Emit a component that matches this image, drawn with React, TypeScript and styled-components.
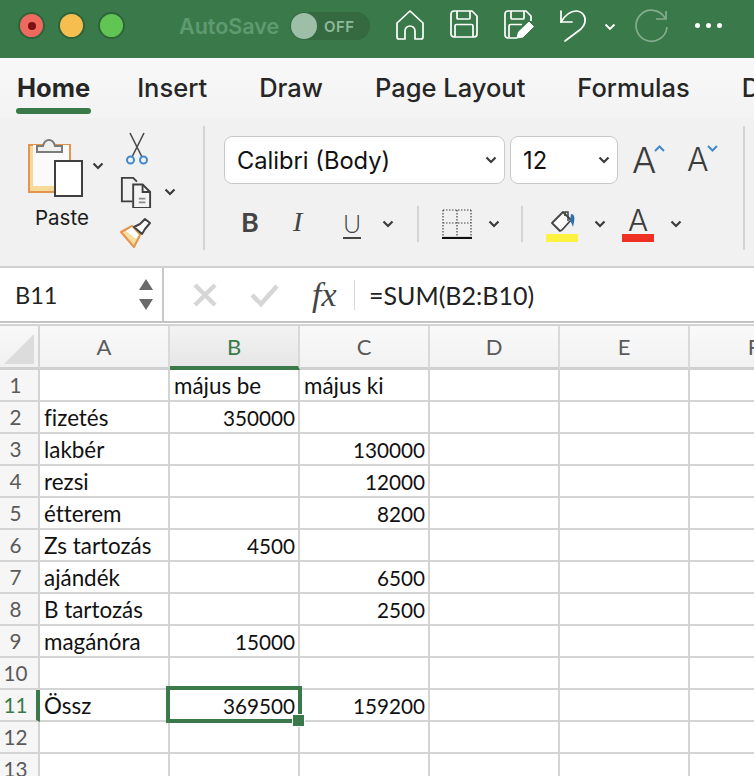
import styled, { createGlobalStyle } from "styled-components";

const GREEN = "#3a7a4a";

const rows: [string, string, string][] = [
  ["", "május be", "május ki"],
  ["fizetés", "350000", ""],
  ["lakbér", "", "130000"],
  ["rezsi", "", "12000"],
  ["étterem", "", "8200"],
  ["Zs tartozás", "4500", ""],
  ["ajándék", "", "6500"],
  ["B tartozás", "", "2500"],
  ["magánóra", "15000", ""],
  ["", "", ""],
  ["Össz", "369500", "159200"],
  ["", "", ""],
  ["", "", ""],
];

const columns = ["A", "B", "C", "D", "E", "F"];

const isNumber = (v: string) => /^\d+$/.test(v);

function Chevron({ left = 0 }: { left?: number }) {
  return (
    <ChevronIcon viewBox="0 0 12 8" $left={left}>
      <path d="M1.5 1.5 6 6l4.5-4.5" />
    </ChevronIcon>
  );
}

export default function App() {
  return (
    <Page>
      <Global />
      <TitleBar>
        <Lights>
          <Light $color="#ee6a5f">
            <Dot />
          </Light>
          <Light $color="#f6bd4f" />
          <Light $color="#61c554" />
        </Lights>
        <AutoSave>AutoSave</AutoSave>
        <Toggle>
          <Knob />
          <span>OFF</span>
        </Toggle>
        <QuickIcons>
          <svg width="30" height="32" viewBox="0 0 30 32" fill="none" stroke="#fff" strokeWidth="1.7" strokeLinejoin="round">
            <path d="M2 14 15 2l13 12v14a2 2 0 0 1-2 2h-6v-8a5 5 0 0 0-10 0v8H4a2 2 0 0 1-2-2Z" />
          </svg>
          <QuickIcon width="30" height="30" viewBox="0 0 30 30" fill="none" stroke="#fff" strokeWidth="1.7" strokeLinejoin="round" $left={24}>
            <path d="M2 5a3 3 0 0 1 3-3h18l5 5v18a3 3 0 0 1-3 3H5a3 3 0 0 1-3-3Z" />
            <path d="M8 2v7a1 1 0 0 0 1 1h11a1 1 0 0 0 1-1V2" />
            <path d="M6 28V17a1.5 1.5 0 0 1 1.5-1.5h15A1.5 1.5 0 0 1 24 17v11" />
          </QuickIcon>
          <QuickIcon width="32" height="32" viewBox="0 0 32 32" fill="none" stroke="#fff" strokeWidth="1.7" strokeLinejoin="round" $left={24}>
            <path d="M14 29H5a3 3 0 0 1-3-3V5a3 3 0 0 1 3-3h18l5 5v5" />
            <path d="M8 2v7a1 1 0 0 0 1 1h11a1 1 0 0 0 1-1V2" />
            <path d="M6 28V17a1.5 1.5 0 0 1 1.5-1.5H19" />
            <path d="M14 29l1.5-6L26 13l4.5 4.5L20 28Z" fill="#fff" strokeWidth="1" />
          </QuickIcon>
          <QuickIcon width="30" height="34" viewBox="0 0 30 34" fill="none" stroke="#fff" strokeWidth="1.7" strokeLinecap="round" strokeLinejoin="round" $left={24}>
            <path d="M2 2v11h11" />
            <path d="M2 13C7 5 13 2 17 2c6 0 10 5 9 11-.5 3-2 5-4 7L6 32" />
          </QuickIcon>
          <UndoChevron viewBox="0 0 12 8">
            <path d="M1.5 1.5 6 6l4.5-4.5" />
          </UndoChevron>
          <QuickIcon width="34" height="34" viewBox="0 0 34 34" fill="none" stroke="#fff" strokeWidth="1.7" opacity=".38" $left={19}>
            <path d="M30 9A15.5 15.5 0 1 0 32 18" />
            <path d="M31 2v8H21" />
          </QuickIcon>
          <Dots>
            <i />
            <i />
            <i />
          </Dots>
        </QuickIcons>
      </TitleBar>

      <Tabs>
        <Tab $active>Home</Tab>
        <Tab>Insert</Tab>
        <Tab>Draw</Tab>
        <Tab>Page Layout</Tab>
        <Tab>Formulas</Tab>
        <Tab>Data</Tab>
      </Tabs>

      <Ribbon>
        <ClipGroup>
          <PasteColumn>
            <svg width="56" height="62" viewBox="0 0 56 62">
              <rect x="1" y="10" width="41" height="47" fill="#f7d998" stroke="#e39550" strokeWidth="2" />
              <rect x="5" y="10" width="36" height="41" fill="#fafafa" />
              <path d="M9 17v-6h6c1-4 3-6 6-6s5 2 6 6h7v6Z" fill="#f0f0f0" stroke="#7b7b78" strokeWidth="2" />
              <rect x="27" y="26" width="27" height="35" fill="#fff" stroke="#3f3f3f" strokeWidth="2" />
            </svg>
            <PasteLabel>Paste</PasteLabel>
          </PasteColumn>
          <PasteChevron>
            <Chevron />
          </PasteChevron>
          <ToolColumn>
            <QuickIcon width="24" height="34" viewBox="0 0 24 34" fill="none" $left={5}>
              <path d="M5 1 17 25M19 1 7 25" stroke="#4a4a4a" strokeWidth="1.6" />
              <circle cx="5.5" cy="28" r="3.5" stroke="#3f8ad0" strokeWidth="2" />
              <circle cx="18.5" cy="28" r="3.5" stroke="#3f8ad0" strokeWidth="2" />
            </QuickIcon>
            <CopyRow>
              <svg width="32" height="32" viewBox="0 0 34 34" fill="none" stroke="#3f3f3f" strokeWidth="2">
                <path d="M13 27H2V2h12l4 4" />
                <path d="M14 9h10l8 8v17H14Z" fill="#f4f4f4" />
                <path d="M24 9v8h8" />
                <path d="M20 24h7M20 28h7" stroke="#8a8a8a" />
              </svg>
              <Chevron />
            </CopyRow>
            <svg width="32" height="30" viewBox="0 0 32 30" fill="none">
              <path d="M1 14 12 8l8 9-6 12Z" fill="#f8dd9f" stroke="#e39550" strokeWidth="2" strokeLinejoin="round" />
              <path d="M6 13 12 9l7 8-3 4Z" fill="#fff" />
              <path d="M14 9l6-3 5-5 5 4-5 6-3 5Z" fill="#fff" stroke="#444" strokeWidth="2" strokeLinejoin="round" />
            </svg>
          </ToolColumn>
        </ClipGroup>
        <Divider $height={124} />
        <FontGroup>
          <FontRow>
            <Select $width={281}>
              Calibri (Body)
              <Chevron />
            </Select>
            <Select $width={108}>
              12
              <Chevron />
            </Select>
            <GrowFont $size={36} $width={41}>
              A
              <svg width="11" height="7" viewBox="0 0 11 7" fill="none" stroke="#3f8ad0" strokeWidth="2">
                <path d="M1 6 5.5 1.5 10 6" />
              </svg>
            </GrowFont>
            <GrowFont $size={32} $width={40}>
              A
              <svg width="11" height="7" viewBox="0 0 11 7" fill="none" stroke="#3f8ad0" strokeWidth="2">
                <path d="M1 1l4.5 4.5L10 1" />
              </svg>
            </GrowFont>
          </FontRow>
          <FormatRow>
            <Bold>B</Bold>
            <Italic>I</Italic>
            <Underline>U</Underline>
            <Chevron left={21} />
            <Divider $height={36} $left={23} />
            <BorderIcon width="30" height="30" viewBox="0 0 30 30" fill="none" stroke="#444" strokeWidth="1.2" strokeDasharray="1.5 1.5">
              <path d="M1 1h28M1 14h28M15 1v27M1 1v27M29 1v27" />
              <path d="M0 29h30" stroke="#111" strokeWidth="2.2" strokeDasharray="none" />
            </BorderIcon>
            <Chevron left={16} />
            <Divider $height={36} $left={21} />
            <ColorButton $bar="#fdf23f" $left={23}>
              <svg width="28" height="24" viewBox="0 0 28 24" fill="none" style={{ marginRight: -4 }}>
                <path d="M2 13 13 2l8 8-9 10-2 1Z" fill="#fafafa" stroke="#444" strokeWidth="1.8" strokeLinejoin="round" />
                <path d="M15 6V2h3v9" stroke="#444" strokeWidth="1.5" />
                <path d="M21 4c3 0 4 3 3 8l-1 5c-1-3-2-5-3-6Z" fill="#2f6fae" />
              </svg>
            </ColorButton>
            <Chevron left={16} />
            <ColorButton $bar="#ee3124" $left={16}>
              <ColorLetter>A</ColorLetter>
            </ColorButton>
            <Chevron left={16} />
          </FormatRow>
        </FontGroup>
        <Divider $height={124} />
      </Ribbon>

      <FormulaBar>
        <NameBox>
          B11
          <Stepper>
            <i />
            <i />
          </Stepper>
        </NameBox>
        <FormulaBox>
          <svg width="24" height="24" viewBox="0 0 24 24" stroke="#d6d6d6" strokeWidth="4.5" fill="none">
            <path d="M2 2l20 20M22 2 2 22" />
          </svg>
          <CheckIcon width="30" height="24" viewBox="0 0 30 24" stroke="#d6d6d6" strokeWidth="4.5" fill="none">
            <path d="M2 12l9 9L27 3" />
          </CheckIcon>
          <Fx>fx</Fx>
          <FxDivider />
          <FormulaText>=SUM(B2:B10)</FormulaText>
        </FormulaBox>
      </FormulaBar>

      <Sheet>
        <Corner>
          <svg width="32" height="32" viewBox="0 0 32 32">
            <path d="M31 1v30H1Z" fill="#dcdcdc" />
          </svg>
        </Corner>
        {columns.map((c) => (
          <ColumnHead key={c} $active={c === "B"}>
            {c}
          </ColumnHead>
        ))}
        {rows.map((row, i) => (
          <Row key={i} row={row} index={i + 1} />
        ))}
      </Sheet>
    </Page>
  );
}

function Row({ row, index }: { row: [string, string, string]; index: number }) {
  const active = index === 11;
  return (
    <>
      <RowHead $active={active}>{index}</RowHead>
      {row.map((v, i) => (
        <Cell key={i} $number={isNumber(v)}>
          {v}
          {active && i === 1 && (
            <Selection>
              <Handle />
            </Selection>
          )}
        </Cell>
      ))}
      <Cell />
      <Cell />
      <Cell />
    </>
  );
}

const Global = createGlobalStyle`
  html, body {
    margin: 0;
    padding: 0;
    background: #fff;
    overflow: hidden;
  }
  * {
    box-sizing: border-box;
  }
`;

const Page = styled.div`
  width: 754px;
  height: 776px;
  overflow: hidden;
  font-family: Inter, "Liberation Sans", sans-serif;
  background: #fff;
`;

const TitleBar = styled.div`
  height: 58px;
  background: ${GREEN};
  display: flex;
  align-items: flex-start;
  padding: 12px 0 0 18px;
`;

const Lights = styled.div`
  display: flex;
  gap: 13px;
`;

const Light = styled.div<{ $color: string }>`
  width: 27px;
  height: 27px;
  border-radius: 50%;
  background: ${(p) => p.$color};
  border: 2px solid #2f6339;
  display: flex;
  align-items: center;
  justify-content: center;
`;

const Dot = styled.div`
  width: 8px;
  height: 8px;
  border-radius: 50%;
  background: #7d1010;
`;

const AutoSave = styled.div`
  margin: 1px 0 0 54px;
  width: 111px;
  font-size: 21.5px;
  line-height: 27px;
  font-weight: 600;
  color: #5f9a70;
  white-space: nowrap;
`;

const Toggle = styled.div`
  width: 80px;
  height: 28px;
  border-radius: 14px;
  background: #35693f;
  display: flex;
  align-items: center;
  gap: 7px;
  font-size: 15px;
  font-weight: 600;
  letter-spacing: 0.5px;
  color: #8fb99b;
`;

const Knob = styled.div`
  width: 26px;
  height: 26px;
  border-radius: 50%;
  background: #9dbfa8;
  margin-left: 1px;
`;

const QuickIcons = styled.div`
  display: flex;
  align-items: flex-start;
  margin: -3px 0 0 25px;
`;

const QuickIcon = styled.svg<{ $left: number }>`
  margin-left: ${(p) => p.$left}px;
  flex: none;
`;

const UndoChevron = styled.svg`
  width: 12px;
  height: 8px;
  margin: 14px 0 0 15px;
  fill: none;
  stroke: #fff;
  stroke-width: 1.8;
`;

const Dots = styled.div`
  display: flex;
  gap: 6px;
  margin: 14px 0 0 26px;

  i {
    width: 5px;
    height: 5px;
    border-radius: 50%;
    background: #fff;
  }
`;

const Tabs = styled.div`
  height: 60px;
  background: linear-gradient(#f8f8f8, #f3f3f3);
  display: flex;
  gap: 52px;
  padding-left: 17px;
  white-space: nowrap;
`;

const Tab = styled.div<{ $active?: boolean }>`
  position: relative;
  height: 56px;
  font-size: 25.5px;
  line-height: 59px;
  font-weight: ${(p) => (p.$active ? 700 : 500)};
  color: #262626;
  margin-right: ${(p) => (p.$active ? "-5px" : "0")};

  &::after {
    content: "";
    display: ${(p) => (p.$active ? "block" : "none")};
    position: absolute;
    left: -1px;
    right: -1px;
    top: 50px;
    height: 6px;
    border-radius: 3px;
    background: ${GREEN};
  }
`;

const Ribbon = styled.div`
  height: 150px;
  background: #f1f1f1;
  border-bottom: 2px solid #d0d0d0;
  display: flex;
  align-items: flex-start;
  padding-top: 8px;
`;

const ClipGroup = styled.div`
  width: 203px;
  display: flex;
  padding-left: 28px;
`;

const PasteColumn = styled.div`
  width: 68px;
  display: flex;
  flex-direction: column;
  align-items: flex-start;
  padding-top: 9px;
`;

const PasteLabel = styled.div`
  margin: 9px 0 0 7px;
  font-size: 20.5px;
  line-height: 24px;
  color: #1c1c1c;
`;

const PasteChevron = styled.div`
  margin: 28px 0 0 -4px;
`;

const ToolColumn = styled.div`
  display: flex;
  flex-direction: column;
  align-items: flex-start;
  margin-left: 16px;
  padding-top: 6px;
  gap: 10px;
`;

const CopyRow = styled.div`
  display: flex;
  align-items: center;
  gap: 12px;
`;

const ChevronIcon = styled.svg<{ $left: number }>`
  width: 12px;
  height: 8px;
  margin-left: ${(p) => p.$left}px;
  fill: none;
  stroke: #3c3c3c;
  stroke-width: 2.2;
  flex: none;
`;

const Divider = styled.div<{ $height: number; $left?: number }>`
  width: 2px;
  height: ${(p) => p.$height}px;
  margin-left: ${(p) => p.$left ?? 0}px;
  background: #d4d4d4;
  flex: none;
`;

const FontGroup = styled.div`
  width: 538px;
  padding: 10px 0 0 19px;
`;

const FontRow = styled.div`
  display: flex;
  align-items: center;
  gap: 5px;
`;

const Select = styled.div<{ $width: number }>`
  width: ${(p) => p.$width}px;
  height: 48px;
  background: #fff;
  border: 1.5px solid #c9c9c9;
  border-radius: 8px;
  display: flex;
  align-items: center;
  justify-content: space-between;
  padding: 0 7px 0 12px;
  font-size: 23.7px;
  color: #111;
`;

const GrowFont = styled.div<{ $size: number; $width: number }>`
  display: flex;
  align-items: flex-start;
  margin-left: 9px;
  width: ${(p) => p.$width}px;
  font-size: ${(p) => p.$size}px;
  line-height: 40px;
  font-weight: 300;
  color: #3c3c3c;

  svg {
    flex: none;
    margin: 5px 0 0 -2px;
  }
`;

const FormatRow = styled.div`
  display: flex;
  align-items: center;
  margin-top: 22px;
  height: 36px;
  padding-left: 17px;
`;

const Bold = styled.div`
  width: 52px;
  font: 700 27px Lato, sans-serif;
  line-height: 32px;
  margin-top: -4px;
  color: #444;
`;

const Italic = styled.div`
  width: 50px;
  font: italic 28px "Liberation Serif", serif;
  line-height: 32px;
  margin-top: -4px;
  color: #444;
`;

const Underline = styled.div`
  width: 18px;
  font: 300 25px Lato, sans-serif;
  color: #444;
  border-bottom: 2px solid #444;
  text-align: center;
  line-height: 28px;
`;

const BorderIcon = styled.svg`
  margin-left: 23px;
  flex: none;
`;

const ColorButton = styled.div<{ $bar: string; $left: number }>`
  width: 32px;
  height: 36px;
  margin-left: ${(p) => p.$left}px;
  border-bottom: 8px solid ${(p) => p.$bar};
  display: flex;
  justify-content: center;
  align-items: flex-end;
`;

const ColorLetter = styled.div`
  font-size: 30px;
  line-height: 28px;
  font-weight: 300;
  color: #3c3c3c;
`;

const FormulaBar = styled.div`
  height: 55px;
  background: #fff;
  display: flex;
  border-bottom: 2px solid #c4c4c4;
`;

const NameBox = styled.div`
  width: 164px;
  display: flex;
  align-items: center;
  justify-content: space-between;
  padding: 0 9px 0 15px;
  font: 23.5px Lato, sans-serif;
  color: #222;
  border-right: 2px solid #c9c9c9;
`;

const Stepper = styled.div`
  display: flex;
  flex-direction: column;
  gap: 9px;

  i {
    width: 0;
    height: 0;
    border-left: 7px solid transparent;
    border-right: 7px solid transparent;
    border-bottom: 11px solid #6a6a6a;
  }

  i:last-child {
    border-bottom: 0;
    border-top: 11px solid #6a6a6a;
  }
`;

const FormulaBox = styled.div`
  flex: 1;
  margin-left: 2px;
  display: flex;
  align-items: center;
  padding-left: 27px;
`;

const CheckIcon = styled.svg`
  margin-left: 33px;
`;

const Fx = styled.div`
  width: 42px;
  margin-left: 32px;
  font: italic 34px "Liberation Serif", serif;
  color: #444;
`;

const FxDivider = styled.div`
  width: 1px;
  height: 30px;
  background: #dadada;
`;

const FormulaText = styled.div`
  margin-left: 14px;
  font: 25px Lato, sans-serif;
  color: #222;
`;

const Sheet = styled.div`
  margin-top: 1px;
  border-top: 2px solid #d4d4d4;
  display: grid;
  grid-template-columns: 40px repeat(5, 130px) 130px;
  grid-template-rows: 44px;
  grid-auto-rows: 32px;
  font-family: Lato, sans-serif;
  font-variant-ligatures: none;
`;

const Corner = styled.div`
  background: linear-gradient(#f8f8f8, #f1f1f1);
  border-right: 2px solid #d4d4d4;
  border-bottom: 3px solid #d0d0d0;
  display: flex;
  align-items: center;
  justify-content: flex-end;
  padding: 4px 3px 0 0;
`;

const ColumnHead = styled.div<{ $active?: boolean }>`
  background: ${(p) => (p.$active ? "linear-gradient(#f3f3f3, #e6e6e6)" : "linear-gradient(#f9f9f9, #f2f2f2)")};
  border-right: 2px solid #d9d9d9;
  border-bottom: ${(p) => (p.$active ? `4px solid ${GREEN}` : "3px solid #d0d0d0")};
  display: flex;
  align-items: center;
  justify-content: center;
  font-size: 22px;
  color: ${(p) => (p.$active ? GREEN : "#5a5a5a")};
`;

const RowHead = styled.div<{ $active?: boolean }>`
  position: relative;
  background: #f6f6f6;
  border-right: ${(p) => (p.$active ? `4px solid ${GREEN}` : "2px solid #d4d4d4")};
  border-bottom: 2px solid #d4d4d4;
  font-size: 20.7px;
  line-height: 31px;
  width: 40px;
  padding-right: ${(p) => (p.$active ? "5px" : "7px")};
  text-align: center;
  color: ${(p) => (p.$active ? GREEN : "#5a5a5a")};
`;

const Cell = styled.div<{ $number?: boolean }>`
  position: relative;
  border-right: 2px solid #d4d4d4;
  border-bottom: 2px solid #d4d4d4;
  padding: 0 3px 0 4px;
  font-size: ${(p) => (p.$number ? "20.7px" : "22.4px")};
  line-height: 32px;
  color: #111;
  white-space: nowrap;
  text-align: ${(p) => (p.$number ? "right" : "left")};
`;

const Selection = styled.div`
  position: absolute;
  z-index: 2;
  left: -4px;
  top: -4px;
  width: 136px;
  height: 37px;
  border: 4px solid ${GREEN};
`;

const Handle = styled.div`
  position: absolute;
  right: -6px;
  bottom: -7px;
  width: 11px;
  height: 11px;
  background: ${GREEN};
  outline: 1px solid #fff;
`;
